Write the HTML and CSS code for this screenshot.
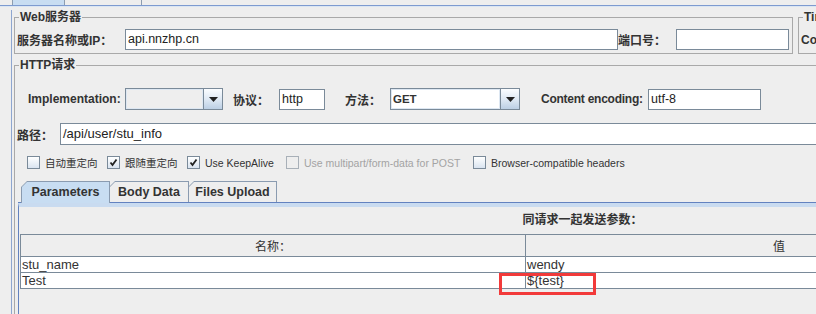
FILE: index.html
```html
<!DOCTYPE html>
<html lang="zh-CN">
<head>
  <meta charset="UTF-8" />
  <meta name="viewport" content="width=device-width, initial-scale=1.0" />
  <title>HTTP请求</title>
  <link rel="stylesheet" href="styles.css">
</head>
<body>
  <div class="top-tabs">
    <div class="top-tab active"></div>
    <div class="top-tab"></div>
  </div>
  <div class="top-line"></div>

  <div class="outer">
    <div class="server-row">
      <fieldset class="group web">
        <legend>Web服务器</legend>
        <div class="row">
          <label class="lbl host-lbl">服务器名称或IP：</label>
          <div class="field host">api.nnzhp.cn</div>
          <label class="lbl port-lbl">端口号：</label>
          <div class="field port"></div>
        </div>
      </fieldset>
      <fieldset class="group timeout">
        <legend>Timeouts (milliseconds)</legend>
        <div class="row">
          <label class="lbl">Connect:</label>
        </div>
      </fieldset>
    </div>

    <fieldset class="group http">
      <legend>HTTP请求</legend>
      <div class="row impl-row">
        <label class="lbl impl-lbl">Implementation:</label>
        <div class="combo impl">
          <span class="combo-text"></span>
          <span class="combo-btn"><svg width="9" height="5" viewBox="0 0 9 5"><path d="M0 0 L9 0 L4.5 5 Z" fill="#222"/></svg></span>
        </div>
        <label class="lbl proto-lbl">协议：</label>
        <div class="field proto">http</div>
        <label class="lbl method-lbl">方法：</label>
        <div class="combo method">
          <span class="combo-text">GET</span>
          <span class="combo-btn"><svg width="9" height="5" viewBox="0 0 9 5"><path d="M0 0 L9 0 L4.5 5 Z" fill="#222"/></svg></span>
        </div>
        <label class="lbl enc-lbl">Content encoding:</label>
        <div class="field enc">utf-8</div>
      </div>

      <div class="row path-row">
        <label class="lbl path-lbl">路径：</label>
        <div class="field path">/api/user/stu_info</div>
      </div>

      <div class="checks">
        <label class="check c1"><span class="box"></span>自动重定向</label>
        <label class="check c2"><span class="box"><svg width="11" height="11" viewBox="0 0 11 11"><path d="M2.5 5.5 L4.5 8 L8.5 2.5" fill="none" stroke="#222" stroke-width="1.8"/></svg></span>跟随重定向</label>
        <label class="check c3"><span class="box"><svg width="11" height="11" viewBox="0 0 11 11"><path d="M2.5 5.5 L4.5 8 L8.5 2.5" fill="none" stroke="#222" stroke-width="1.8"/></svg></span>Use KeepAlive</label>
        <label class="check c4 disabled"><span class="box"></span>Use multipart/form-data for POST</label>
        <label class="check c5"><span class="box"></span>Browser-compatible headers</label>
      </div>

      <div class="tabs">
        <div class="tab active"><span>Parameters</span></div>
        <div class="tab body-tab"><span>Body Data</span></div>
        <div class="tab"><span>Files Upload</span></div>
      </div>

      <div class="tab-panel">
        <div class="panel-title">同请求一起发送参数：</div>
        <div class="table-wrap">
          <table class="params">
            <thead>
              <tr><th class="name-col">名称：</th><th>值</th></tr>
            </thead>
            <tbody>
              <tr><td class="name-col">stu_name</td><td>wendy</td></tr>
              <tr><td class="name-col">Test</td><td>${test}</td></tr>
            </tbody>
          </table>
          <div class="highlight"></div>
        </div>
      </div>
    </fieldset>
  </div>
</body>
</html>
```

FILE: styles.css
```css
*, *::before, *::after { box-sizing: border-box; }
body {
  margin: 0;
  width: 816px;
  height: 314px;
  overflow: hidden;
  background-color: #eeeeee;
  font-family: "Liberation Sans", "Noto Sans CJK SC", sans-serif;
  font-size: 12px;
  color: #333;
}

/* tabs of the outer pane */
.top-tabs {
  display: flex;
  height: 5px;
  padding-left: 12px;
}
.top-tab {
  width: 53px;
  border-left: 1px solid #8d9db0;
  border-right: 1px solid #8d9db0;
}
.top-tab.active { background-color: #c8ddf2; }
.top-tab + .top-tab {
  width: 77px;
  border-left: none;
}
.top-line {
  height: 2px;
  border-top: 1px solid #7e9bd0;
  background-color: #dbe6f3;
}

.outer {
  margin-left: 11px;
  padding-left: 2px;
  border-left: 1px solid #8ea6d0;
  height: 307px;
}

/* titled group boxes */
.group {
  margin: 0;
  padding: 0 2px;
  min-width: 0;
  border: 1px solid #a9a9a9;
}
.group legend {
  margin-left: 2px;
  padding: 0 1px;
  font-weight: bold;
  font-size: 12px;
  line-height: 14px;
  white-space: nowrap;
}
.row {
  display: flex;
  align-items: center;
}
.lbl {
  font-weight: bold;
  white-space: nowrap;
  flex-shrink: 0;
}

.server-row {
  display: flex;
  gap: 5px;
  margin-top: 3px;
}
.web {
  width: 779px;
  flex-shrink: 0;
  padding-bottom: 3px;
}
.web .row { padding-top: 5px; }
.timeout {
  width: 200px;
  flex-shrink: 0;
  padding-bottom: 3px;
}
.timeout .row {
  padding-top: 5px;
  height: 26px;
}

.field {
  height: 21px;
  padding: 0 2px;
  background-color: #fff;
  border: 1px solid #7a8a99;
  font-size: 12.5px;
  line-height: 19px;
  color: #222;
  white-space: nowrap;
  flex-shrink: 0;
}
.host-lbl { width: 108px; }
.host { width: 493px; }
.port-lbl { width: 58px; }
.port { width: 113px; }

.http {
  width: 1200px;
  margin-top: 4px;
  height: 260px;
}
.impl-row {
  margin-top: 16px;
  height: 22px;
}
.impl-lbl { width: 97px; margin-left: 11px; }
.combo {
  display: flex;
  height: 22px;
  border: 1px solid #7a8a99;
  flex-shrink: 0;
}
.combo-text {
  flex: 1;
  padding-left: 2px;
  font-weight: bold;
  font-size: 11.5px;
  line-height: 20px;
  background-color: #fff;
  box-shadow: inset 0 0 0 1px #dde7f2;
}
.impl .combo-text { background-color: #eeeeee; }
.combo-btn {
  width: 19px;
  display: flex;
  align-items: center;
  justify-content: center;
  border-left: 1px solid #7a8a99;
  background: linear-gradient(#fbfdff, #dce7f3 55%, #bccfe4);
}
.impl { width: 98px; }
.proto-lbl { width: 46px; margin-left: 10px; }
.proto { width: 46px; }
.method-lbl { width: 45px; margin-left: 20px; }
.method { width: 130px; }
.enc-lbl {
  width: 107px;
  margin-left: 21px;
  letter-spacing: -0.25px;
}
.enc { width: 113px; }

.path-row {
  margin-top: 13px;
  height: 22px;
}
.path-lbl { width: 43px; }
.path {
  flex: 1;
  height: 22px;
  line-height: 20px;
  font-size: 13px;
}

/* check boxes */
.checks {
  display: flex;
  margin-top: 11px;
  padding-left: 10px;
  height: 13px;
}
.check {
  display: flex;
  align-items: center;
  gap: 5px;
  font-size: 10.5px;
  white-space: nowrap;
  flex-shrink: 0;
}
.box {
  width: 13px;
  height: 13px;
  display: flex;
  align-items: center;
  justify-content: center;
  border: 1px solid #7a8a99;
  background: linear-gradient(#ffffff, #d9e4f0);
}
.c1, .c2 { width: 80px; }
.c3 { width: 99px; }
.c4 { width: 187px; }
.check.disabled { color: #a3a3a3; }
.check.disabled .box {
  border-color: #a8b0b8;
  background: #eeeeee;
}

/* parameter tabs */
.tabs {
  display: flex;
  margin-top: 12px;
  margin-left: 1px;
  padding-left: 3px;
  height: 22px;
  border-bottom: 1px solid #6382bf;
}
.tab {
  height: 21px;
  padding: 1px 1px 0 1px;
  background-color: #8a9bb0;
  clip-path: polygon(0 6px, 6px 0, 100% 0, 100% 100%, 0 100%);
  font-weight: bold;
  font-size: 12.5px;
}
.tab span {
  display: block;
  height: 20px;
  line-height: 20px;
  text-align: center;
  background-color: #eeeeee;
  clip-path: polygon(0 5px, 5px 0, 100% 0, 100% 100%, 0 100%);
}
.tab.active {
  width: 89px;
  height: 22px;
  padding-bottom: 0;
}
.tab.active span {
  height: 21px;
  background-color: #c8ddf2;
}
.body-tab {
  width: 80px;
  margin-left: -1px;
}
.tab:last-child {
  width: 89px;
  margin-left: -1px;
}

.tab-panel {
  margin-left: 1px;
  border-left: 1px solid #6382bf;
  border-top: 4px solid #c9dbf0;
  height: 120px;
}
.panel-title {
  width: 1127px;
  height: 27px;
  line-height: 27px;
  text-align: center;
  font-weight: bold;
}

.table-wrap {
  position: relative;
  margin-left: 1px;
}
.params {
  width: 1013px;
  table-layout: fixed;
  border-collapse: collapse;
  border: 1px solid #7a8a99;
  font-size: 13px;
}
.params th {
  height: 22px;
  padding: 0;
  font-weight: normal;
  font-size: 12px;
  text-align: center;
  border-bottom: 1px solid #7a8a99;
}
.params td {
  height: 16px;
  padding: 0 1px;
  line-height: 15px;
  background-color: #fff;
  border-bottom: 1px solid #7a8a99;
  white-space: nowrap;
}
.params .name-col {
  width: 505px;
  border-right: 1px solid #7a8a99;
}
.highlight {
  position: absolute;
  left: 479px;
  top: 39px;
  width: 97px;
  height: 22px;
  border: 3px solid #f23a3a;
}
```
